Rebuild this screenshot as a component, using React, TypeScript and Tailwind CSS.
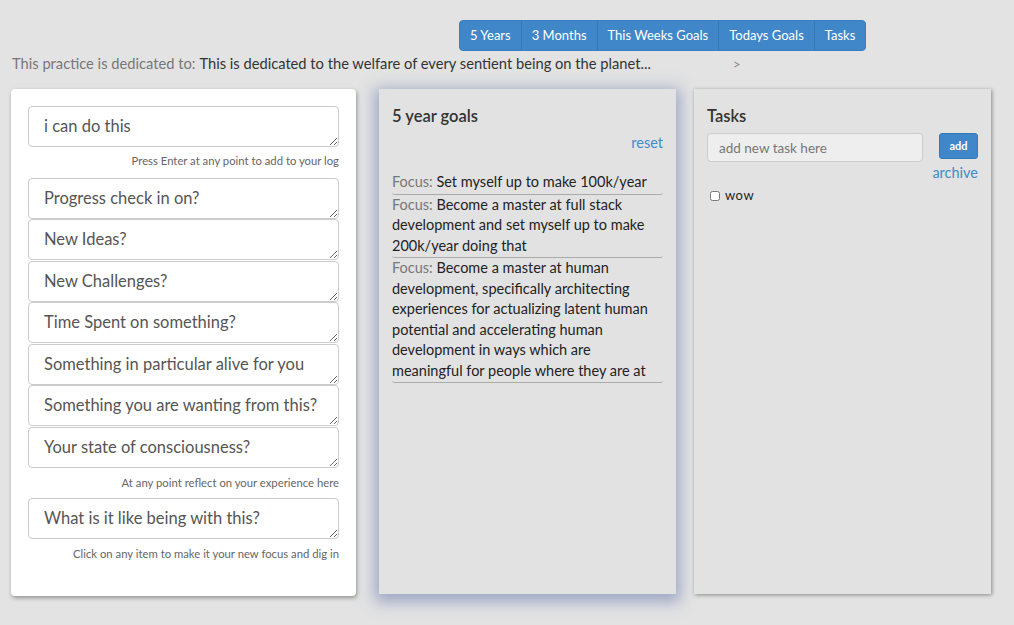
import React from 'react';

const prompts = [
  'Progress check in on?',
  'New Ideas?',
  'New Challenges?',
  'Time Spent on something?',
  'Something in particular alive for you',
  'Something you are wanting from this?',
  'Your state of consciousness?',
];

const goals = [
  'Set myself up to make 100k/year',
  'Become a master at full stack development and set myself up to make 200k/year doing that',
  'Become a master at human development, specifically architecting experiences for actualizing latent human potential and accelerating human development in ways which are meaningful for people where they are at',
];

const tabs = ['5 Years', '3 Months', 'This Weeks Goals', 'Todays Goals', 'Tasks'];

const fieldClass =
  'block w-full h-[41px] rounded-[4px] border border-[#ccc] bg-white px-[15px] pt-[8px] text-[16.5px] leading-[22px] text-[#555] placeholder:text-[#555] outline-none';

const App: React.FC = () => {
  return (
    <div
      className="min-h-screen w-[1014px] h-[625px] overflow-hidden bg-[#e3e3e3] text-[#333]"
      style={{ fontFamily: 'Lato, "Noto Sans", sans-serif' }}
    >
      {/* Nav */}
      <div className="pt-[20px] pl-[459px]">
        <div className="inline-flex rounded-[4px] overflow-hidden bg-[#3f87c8] border border-[#3a7ebd]">
          {tabs.map((t, i) => (
            <button
              key={t}
              className={`h-[29px] px-[10px] text-[13px] text-white ${i > 0 ? 'border-l border-[#3578b5]' : ''}`}
            >
              {t}
            </button>
          ))}
        </div>
      </div>

      {/* Dedication */}
      <div className="flex items-center pl-[12px] mt-[2px] text-[14.7px] h-[20px]">
        <span className="w-[721px] whitespace-nowrap">
          <span className="text-[#777]">This practice is dedicated to:</span>
          <span className="ml-[4px] text-[#333]">This is dedicated to the welfare of every sentient being on the planet...</span>
        </span>
        <span className="text-[#888] text-[13px] mt-[3px]">&gt;</span>
      </div>

      <div className="flex items-start mt-[16px] pl-[11px]">
        {/* Log panel */}
        <div className="w-[345px] h-[507px] bg-white rounded-[4px] shadow-[1px_2px_4px_rgba(0,0,0,0.35)] px-[17px] pt-[17px]">
          <textarea className={fieldClass} defaultValue="i can do this" />
          <p className="text-right text-[11.3px] text-[#666] mt-[6px] mb-[8px]">Press Enter at any point to add to your log</p>
          <div className="flex flex-col gap-[0.5px]">
            {prompts.map((p) => (
              <textarea key={p} className={fieldClass} placeholder={p} />
            ))}
          </div>
          <p className="text-right text-[11.3px] text-[#666] mt-[7px] mb-[6px]">At any point reflect on your experience here</p>
          <textarea className={fieldClass} placeholder="What is it like being with this?" />
          <p className="text-right text-[11.3px] text-[#666] mt-[7px]">Click on any item to make it your new focus and dig in</p>
        </div>

        {/* Goals panel */}
        <div className="ml-[23px] w-[297px] h-[505px] bg-[#e2e2e2] shadow-[0_4px_14px_4px_rgba(90,110,170,0.5)] px-[13px] pt-[16px]">
          <h3 className="text-[16.5px] font-semibold text-[#333] leading-[22px]">5 year goals</h3>
          <div className="text-right mt-[3px]">
            <a className="text-[14.5px] text-[#428bca]">reset</a>
          </div>
          <div className="mt-[18px]">
            {goals.map((g) => (
              <div key={g} className="border-b border-[#aaa] rounded-b-[3px] text-[14.5px] leading-[20.5px] text-[#222] pb-[1px]">
                <span className="text-[#777]">Focus: </span>
                {g}
              </div>
            ))}
          </div>
        </div>

        {/* Tasks panel */}
        <div className="ml-[18px] w-[297px] h-[505px] bg-[#e2e2e2] shadow-[1px_1px_4px_rgba(0,0,0,0.4)] px-[13px] pt-[16px]">
          <h3 className="text-[16.5px] font-semibold text-[#333] leading-[22px]">Tasks</h3>
          <div className="flex items-start mt-[6px]">
            <input
              className="w-[216px] h-[29px] rounded-[4px] border border-[#ccc] bg-[#eee] px-[11px] text-[13.5px] text-[#555] placeholder:text-[#777] outline-none"
              placeholder="add new task here"
            />
            <button className="ml-[16px] w-[39px] h-[26px] rounded-[3px] bg-[#3f87c8] border border-[#3578b5] text-white text-[11px] font-bold">
              add
            </button>
          </div>
          <div className="text-right -mt-[2px]">
            <a className="text-[14.5px] text-[#428bca]">archive</a>
          </div>
          <label className="flex items-center mt-[2px] ml-[3px] text-[13px] text-[#222] tracking-[0.5px]">
            <input type="checkbox" className="w-[10px] h-[10px] mr-[5px]" />
            wow
          </label>
        </div>
      </div>
    </div>
  );
};

export default App;
